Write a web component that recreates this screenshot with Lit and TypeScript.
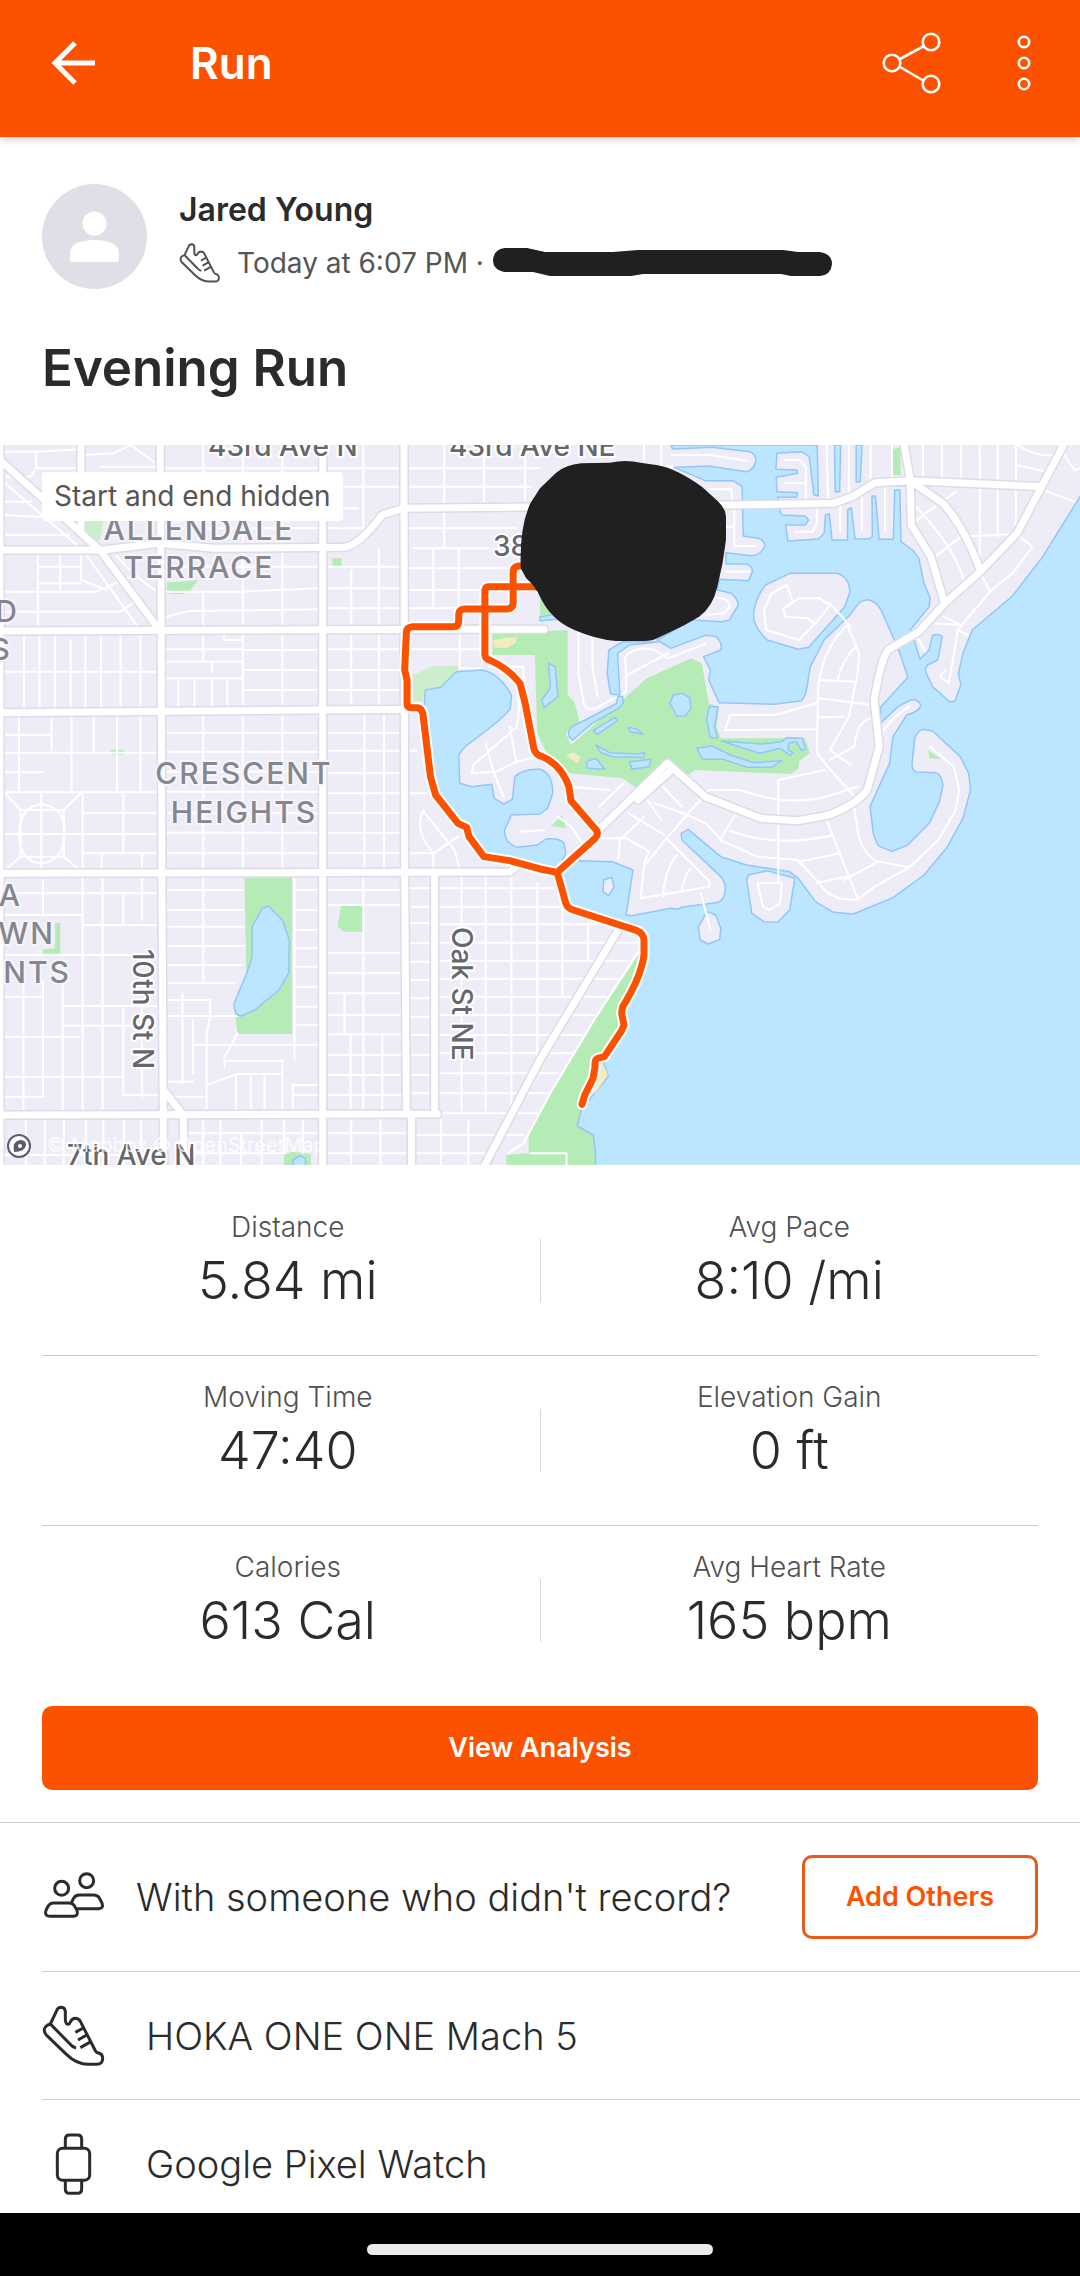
import { LitElement, html, svg, css } from "lit";
import { customElement, property } from "lit/decorators.js";

/* ---------- map geometry, in survey units (3136 x 2160) ---------- */

const SEA =
  "M3136 170L3028 350L2938 470L2823 570L2796 640L2783 700L2790 735L2773 783L2758 786L2708 740L2686 690L2693 675L2723 660L2736 590Q2728 580 2708 585L2698 630L2671 657L2658 610" +
  "L2643 570L2698 500L2701 475L2683 430L2668 355L2650 330L2616 305L2613 150H2598L2594 298H2553L2542 168H2532L2533 290L2523 297H2483L2472 203L2461 210V300H2416L2408 222L2397 225L2393 280L2376 297L2288 303L2281 255H2338L2348 240L2338 228L2270 225L2265 212" +
  "L2258 172H2313L2316 158L2256 155L2254 112L2316 100L2313 90L2253 88L2256 40L2328 35L2350 50L2363 165L2376 168L2373 15H1948L1953 27L2068 22L2178 35Q2195 45 2195 60Q2190 90 2168 95L2058 78L1958 82L2048 122H2128L2155 140L2158 288L2203 295Q2221 305 2221 318Q2210 345 2183 347L2108 338V372H2168Q2185 380 2185 395L2173 422L2088 418L2083 450L2123 460Q2142 475 2144 495L2118 540L2093 545L2008 540L1908 600L1948 625L2048 586Q2085 588 2083 595Q2098 610 2093 630L2043 650L2063 690L2058 720L2088 788L2248 793L2328 782L2340 760L2353 680L2393 600L2468 525L2493 490Q2505 478 2523 480Q2545 485 2558 510L2610 630L2636 712L2558 800L2556 850L2608 800L2643 780Q2665 775 2674 795Q2670 815 2633 825L2593 890L2583 970L2526 1100L2536 1180Q2545 1215 2555 1220L2590 1234L2636 1215L2698 1150L2728 1085L2738 1035Q2735 1005 2718 998L2660 996Q2648 990 2648 975L2656 895Q2662 875 2680 868L2708 873L2788 950L2813 1000L2818 1050L2796 1135L2748 1225L2683 1305L2593 1373L2478 1422L2420 1417L2368 1385L2318 1315L2293 1295L2168 1275L2093 1250L1998 1168L1978 1180L1980 1200L2093 1310Q2107 1330 2106 1345Q2105 1385 2078 1388L1978 1402L1968 1408L1948 1405L1833 1427L1818 1425L1838 1290L1778 1265L1678 1262L1618 1300L1648 1400L1858 1475L1868 1530L1853 1620L1803 1720L1808 1760L1748 1855L1766 1910L1718 1970L1688 2010L1676 2058L1723 2085L1730 2150L1728 2190H3160V170Z";

const LAKE =
  "M1235 750L1280 742L1325 695L1400 690Q1450 700 1485 765L1482 805Q1470 830 1350 920L1332 945L1335 1030L1370 1040L1428 1033L1435 1075L1462 1092L1488 1078L1495 1010Q1520 985 1568 988Q1605 1000 1605 1060L1590 1105L1568 1122L1485 1125L1465 1170Q1463 1205 1500 1222L1560 1215L1585 1197Q1625 1192 1638 1210L1643 1240L1618 1295L1480 1260L1400 1245L1355 1160L1300 1110L1260 1060L1232 800Z";

const CANALS =
  "M2423 15H2441L2438 155H2425ZM2486 15H2503L2498 125H2486ZM1808 605L1768 630L1763 700L1773 762L1800 765L1793 640L1828 615L1910 606Z" +
  "M1568 530L1620 522V538L1568 542ZM780 1398L820 1440L840 1500L838 1600L810 1650L740 1710L700 1728Q680 1728 680 1690L720 1590L732 1550V1460L762 1405Z" +
  "M850 2160L870 2148L887 2155V2190H855Z";

const ISLANDS =
  "M2293 400H2428Q2465 408 2468 455L2453 500L2348 622L2318 628L2228 600Q2185 560 2188 520Q2195 470 2223 435ZM2173 1305L2228 1292L2308 1315L2293 1410L2258 1447L2218 1445L2183 1420L2168 1320Z" +
  "M2053 1415L2078 1425L2093 1465L2090 1498L2056 1512L2033 1500L2028 1460ZM1753 1320L1776 1312L1783 1340L1768 1367L1751 1355Z";

const GREENS =
  "M1430 580L1648 570V765L1668 785L1683 845L1643 880L1658 915L1808 780L1878 715L2008 655L2038 670L2058 790L2088 800L2080 860L2093 895H2338L2351 940L2320 965V985L2296 1002L2018 990L1998 1005L1948 965L1848 1045L1808 1015L1653 1000L1583 930L1560 880L1553 645H1430Z" +
  "M710 1313H848V1782H690L680 1700L715 1600ZM990 1398H1053V1475H1000L980 1460ZM965 355H992V381H965ZM485 428L575 420L550 455Q520 468 485 460ZM312 937L325 929H355L365 937L355 944H325Z" +
  "M825 2190V2145L850 2135L903 2143V2190ZM160 1450L175 1448V1541H125V1528L160 1525ZM2588 28L2615 22V105H2588Z" +
  "M1853 1545L1728 1740L1600 1960L1535 2085V2140L1470 2145V2190H1728L1730 2150L1723 2085L1676 2058L1690 2000L1750 1860L1805 1760L1803 1720L1853 1620L1868 1530ZM1422 2146H1440L1420 2185L1405 2190ZM1600 1158L1632 1125L1643 1165ZM2695 930L2733 957L2698 955ZM1568 455L1590 500L1620 530L1568 526Z";

const PALE_GREENS = "M1200 705L1260 677H1330V690L1280 742L1235 750L1228 785H1200ZM250 245L300 240L290 300L240 300Z";
const SAND = "M1432 600L1500 590L1498 608L1470 625L1435 622ZM1643 945L1665 937L1686 952L1678 972ZM1750 1870L1765 1905L1725 1965Z";

const PONDS =
  "M1593 670L1612 680L1620 770L1580 802L1573 780L1598 745ZM1663 900Q1640 885 1660 860L1700 840L1790 790L1795 768L1808 770L1810 790L1795 805L1720 850Z" +
  "M1723 872L1785 832L1792 842L1735 883ZM1825 862L1850 868L1868 883L1830 875ZM1730 915L1770 938L1850 942L1872 938L1868 952L1780 950L1745 938Z" +
  "M1828 965L1890 958L1885 980L1835 988ZM1703 965L1730 955L1756 988L1705 985ZM1945 790L1955 765L1980 760L2003 772L2006 805L1990 828L1965 828Z" +
  "M2060 800L2085 800L2075 860L2083 893L2062 893L2052 835ZM2023 925L2068 918L2120 945L2190 968L2270 962L2240 982L2170 982L2100 958L2040 958Z" +
  "M2095 903L2210 912L2270 905L2285 893L2330 895L2338 925L2328 932L2312 905L2290 910L2288 930L2302 938L2295 946L2265 925L2205 940Z";

const MAJOR_ROADS =
  "M0 15V2190M235 15V270M465 15L468 560L470 1300L475 2190M937 15V2190M1173 15L1175 1300L1180 2022M1195 2022V2190M1262 1300V2022" +
  "M0 330H300L460 310L620 325L1000 322Q1040 318 1110 225L1170 205L2107 195L2420 190L2475 170L2540 128L2643 122L3025 140M0 573L1180 568H1580M0 818L1170 808M0 1300L1480 1296L1500 1280M0 2025L1270 2022" +
  "M0 60L290 330L470 580M475 1950L532 2025L535 2190M1400 2190L1570 1855L1795 1470M2626 15L2643 120L2646 255L2703 350L2743 490M2643 122L2738 190Q2800 260 2846 390" +
  "M3088 15L2953 280L2846 395L2743 490L2668 575L2578 630Q2558 660 2538 780L2553 920L2518 1050Q2480 1100 2398 1127L2318 1142L2208 1135L2048 1070L1938 970L1798 1110L1728 1180M1955 985L1853 1080";

const COAST_ROAD = "M1853 1535L1728 1735L1600 1955L1520 2110L1475 2140M1540 2140H1645V2190";

const STREETS =
  // west blocks
  "M15 110H90L105 85H230M105 35V85M15 35H105L230 28M250 45L330 40L380 15M380 15L465 80M290 80H465M15 185H90M15 225L130 232M15 285H200M15 130L240 330L400 560M15 455H280L400 400M110 340V565M15 515H350L400 480M175 340V455M110 380H235M110 430H235M235 340V420L310 450M340 350Q400 420 465 460" +
  "M480 85H925M480 140H925M590 15V300M705 15V320M820 15V320M480 200H925M480 265H925M480 455H700L925 445M480 530L550 513L925 508M590 455V560M705 330V560M820 330V560M480 380H925" +
  "M70 585V800M115 585V800M160 585V800M205 600V800M248 585V800M293 585V800M350 585V800M408 585V800M15 695H465" +
  "M480 628H700M590 580V665M480 665H700M705 580V800M820 580V800M705 630H925M705 690H925M705 750H925M480 715H700M518 715V800M565 715V800M615 665V695M615 715V800M660 715V800M650 580V600H700" +
  "M15 885H150M55 830V1055M150 830V930M208 830V1055M272 830V935M340 830V1055M408 830V1055M15 938H465M15 997H125M15 1057H465M480 878H925M480 935H925M480 995H925M480 1055H925M590 825V1290M705 825V1290M820 825V1290" +
  "M15 1060L60 1110H185L235 1060M120 1060V1290M240 1060V1290M358 1060V1240M15 1182H465M60 1110V1250L15 1290M185 1110V1250L230 1290M60 1250H185M120 1093Q188 1100 188 1180Q185 1265 120 1270Q55 1265 55 1180Q58 1100 120 1093M240 1118H465M240 1240H465M295 1240V1290M412 1240V1290M480 1120H925M480 1178H925M480 1240H925" +
  "M15 1360H235M125 1320V1420M15 1425H235M240 1310V2010M298 1310V2010M358 1360V1450M412 1310V1440M240 1360H465M240 1455H465M15 1545H465M15 1670H120M68 1630V2010M125 1625V1970M182 1620V2010M180 1698H465M180 1757H465M15 1790H230M15 1910H355M358 1700V1960M412 1700V1970M15 1970H120M358 1965H465" +
  "M480 1350H705M480 1410H705M480 1460H705M480 1518H710M480 1575H700M480 1630H680M590 1310V1630M480 1680H610M530 1660V1930M560 1740V1900M480 1728H690M690 1780L652 1850V1880M610 1680V1730L600 1780V2010M560 1814H925M600 1935L690 1902H820V1860M652 1862H820M685 1905V2010M728 1905V2010M768 1905V2010M820 1905V2010M850 1935V2010M850 1935H925M480 1925H560M480 1970H590M850 1965H925M855 1310V1860M855 1350H925M855 1410H925M855 1470H925M855 1525H925M855 1580H925M855 1640H925M855 1700H925M855 1755H925" +
  "M75 2040V2190M130 2040V2190M185 2040V2190M250 2040V2190M300 2040V2190M360 2040V2190M410 2040V2190M590 2040V2190M640 2040V2190M700 2080V2190M760 2040V2190M825 2040V2140M880 2040V2140M15 2145H465M545 2080H925M545 2140H820" +
  // central blocks
  "M950 85H1160M950 140H1160M1055 15V290M950 205H1040M950 265H1060M950 380H1160M1020 390V560M1100 330V560M950 445H1160M950 505H1160M1185 85H1568M1185 140H1540M1290 15V190M1405 15V190M1525 15V190M1185 265H1500M1290 215V320M1200 325H1420M1258 325V500M1332 325V500M1185 385H1480M1185 450H1400M1185 505H1330" +
  "M1020 580V800M1100 580V800M950 628H1160M950 690H1160M950 750H1160M1335 575V685M1335 628H1405M1195 628H1335M1335 685H1400M1058 820V1290M950 878H1160M950 932H1210M950 1000H1160M950 1060H1240M950 1118H1160M950 1178H1160M950 1238H1160M1115 820V1290" +
  "M1230 1115L1320 1230L1335 1290M1230 1110Q1200 1170 1258 1240L1330 1190M1185 1240H1258V1290M1055 1310V2010M950 1350H1165M950 1395H1165M950 1538H1165M950 1600H1165M950 1660H1165M950 1725H1165M950 1783H1165M1000 1660V1780M1110 1785V2010M950 1845H1165M950 1905H1165M950 1965H1165M1018 1785V2010" +
  "M1185 1345H1250M1185 1400H1250M1185 1450H1250M1185 1510H1250M1185 1565H1250M1185 1620H1250M1185 1675H1250M1185 1730H1250M1185 1785H1250M1185 1845H1250M1185 1905H1250M1185 1960H1250" +
  "M1275 1345H1630M1275 1400H1640M1275 1453H1800M1275 1508H1855M1275 1562H1830M1275 1616H1795M1275 1670H1760M1275 1725H1725M1275 1785H1690M1275 1840H1660M1275 1900H1620M1275 1960H1590M1275 2020H1560M1340 1310V2010M1410 1310V2010M1485 1310V2010M1560 1330V1850M1633 1330V1670M1707 1450V1560M1210 2085H1520M1210 2140H1430M1280 2040V2190M1360 2040V2190M950 2080H1180M950 2140H1180M1020 2040V2190M1105 2040V2190" +
  "M1410 910L1435 1000L1462 1070M1480 860L1500 970M1370 1000L1375 975L1500 860Q1510 820 1505 750M1370 1000L1440 995L1500 965L1560 950M1420 680H1520V730M1510 1175L1580 1170M1620 1130L1660 1160L1690 1210" +
  // golf side and north shore
  "M1680 575V700L1695 790Q1705 815 1730 805L1818 755V700L1815 650Q1850 615 1900 630L1940 655L2050 610M1720 580V680L1735 770M1820 705L1940 640M1950 45L2060 45L2170 62M2108 150H2125V190M2060 148H2125M2132 205V318H2195M2108 260H2130M2108 395H2175M2080 472L2110 480L2120 500L2100 520L2050 525M1640 80H2060M1870 15V80M1920 15V90" +
  "M2280 60H2320L2340 80V185M2280 130H2338M2310 275H2360L2372 250V195M2400 15L2405 190M2440 190V275M2465 15V160M2503 170V270M2528 15V140M2570 130V270M2590 15V125" +
  // east shore
  "M2680 15V125M2735 15V130M2790 15V130M2845 15V380M2897 15V290M2950 15V270M2950 75L3040 95M3000 140L3120 185M3070 15L3120 90L3136 85M2955 15Q3000 50 3060 45M2655 245L2775 155M2655 195Q2780 330 2800 430M2715 350L2790 290L2930 283M2955 285L2998 320L2940 400L2873 455M2848 400L2875 455L2805 540L2780 575L2770 640L2755 730L2730 710L2745 690M2715 550L2790 555L2740 530M2780 570L2810 585M2660 585L2690 640" +
  // keys
  "M2410 490L2450 530L2495 640L2490 700L2465 830L2410 930M2455 560Q2380 640 2375 760L2372 940L2420 1000L2490 1080M2485 620Q2445 660 2432 720M2378 720L2480 725M2380 775L2535 795M2378 832L2450 830M2110 870L2370 868M2370 790L2250 825H2120L2105 870M2530 835Q2490 840 2480 920L2410 960M2410 930L2470 975M2556 880L2600 830L2640 800M2395 990L2260 1020V1270M1998 1120L2060 1050L2150 1050Q2280 1100 2400 1070L2490 1040" +
  "M2700 920L2770 980L2785 1050L2775 1110L2725 1200L2640 1282L2540 1262Q2490 1220 2488 1150L2480 1100M2400 1140L2490 1375M2640 1282L2540 1340L2490 1378Q2410 1385 2380 1330L2315 1260L2200 1250L2090 1200L2135 1125M2120 1172Q2250 1225 2420 1185M2320 1265L2440 1240M2370 1330L2480 1305M2550 1265L2450 1320" +
  "M1995 1125L1935 1195L1870 1280L1860 1375L2060 1340L2060 1325L1935 1195M1995 1125L2050 1150L2095 1200M1925 1370Q1930 1290 1965 1245M1980 1355Q1985 1310 2005 1285M1825 1120L1930 1185M1795 1260L1800 1200L1870 1130M1740 1195H1820L1885 1235L1870 1270M1900 1090L1960 1110L1995 1125M1655 1040L1770 1050M1740 1100L1810 1030M1880 1080L1920 1140M1925 1040L1980 1100";

const ISLAND_STREETS =
  "M2300 480L2285 435L2240 460L2218 510L2225 570L2320 600L2368 550L2410 495L2380 475H2320L2275 505L2280 530L2345 535L2365 550M2410 490L2470 560M2260 1250V1330M2200 1330L2215 1400L2235 1410L2265 1390L2270 1330H2200M2035 1360L2063 1470";

const ROUTE =
  "M1560 378H1505Q1490 380 1490 398V488Q1490 505 1472 507H1350Q1332 508 1332 524V542Q1332 560 1316 560H1198Q1180 562 1180 578L1175 690L1182 720V792Q1182 803 1195 803H1212Q1225 805 1228 822L1250 1010L1265 1065L1330 1150L1355 1162L1362 1190L1405 1250L1480 1262L1568 1287L1618 1297" +
  "M1600 447L1550 440H1418Q1408 440 1408 455V645Q1410 658 1425 662Q1475 685 1510 730L1525 790L1550 925Q1555 945 1575 950Q1630 975 1652 1040L1658 1082L1733 1172Q1738 1185 1728 1195L1618 1297L1643 1390Q1648 1405 1665 1410L1850 1472Q1868 1480 1870 1500V1545Q1862 1610 1808 1700L1805 1720L1812 1755L1805 1772L1755 1850L1735 1855Q1726 1860 1728 1880L1722 1915L1698 1965L1690 1993";

const BLOT =
  "M1568 145L1615 98Q1640 76 1688 70L1770 68Q1818 58 1860 68L1910 76Q1960 84 2038 140L2083 182Q2108 206 2108 230V300L2098 370L2083 440Q2070 500 2030 530L1988 555L1910 594Q1895 603 1870 603H1788Q1730 598 1668 570Q1600 540 1568 470Q1555 440 1528 415L1512 385Q1508 260 1540 190Z";

const mapArt = svg`
  <g class="survey" transform="translate(0 -5) scale(0.34439 0.33333)">
    <rect class="land" width="3136" height="2200"></rect>
    <path class="green" d=${GREENS}></path>
    <path class="pale" d=${PALE_GREENS}></path>
    <path class="street" d=${STREETS}></path>
    <path class="water" d=${SEA}></path>
    <path class="water" d=${LAKE}></path>
    <path class="water" d=${CANALS}></path>
    <path class="water" d=${PONDS}></path>
    <path class="shore" d=${ISLANDS}></path>
    <path class="sand" d=${SAND}></path>
    <path class="street" d=${ISLAND_STREETS}></path>
    <path class="street" d=${COAST_ROAD}></path>
    <path class="casing" d=${MAJOR_ROADS}></path>
    <path class="road" d=${MAJOR_ROADS}></path>
    <path class="route-halo" d=${ROUTE}></path>
    <path class="route" d=${ROUTE}></path>
  </g>
  <g class="road-name">
    <text x="208" y="11">43rd Ave N</text>
    <text x="449" y="11">43rd Ave NE</text>
    <text x="493" y="111">38th Ave</text>
    <text x="67" y="720">7th Ave N</text>
    <text transform="translate(133 504) rotate(90)">10th St N</text>
    <text transform="translate(452 482) rotate(90)">Oak St NE</text>
  </g>
  <g class="place">
    <text x="199" y="95">ALLENDALE</text>
    <text x="199" y="133">TERRACE</text>
    <text x="244" y="339">CRESCENT</text>
    <text x="244" y="378">HEIGHTS</text>
  </g>
  <g class="place cut">
    <text x="19" y="177">D</text>
    <text x="12" y="215">S</text>
    <text x="22" y="461">A</text>
    <text x="55" y="499">WN</text>
    <text x="71" y="538">NTS</text>
  </g>
  <text class="credit" x="47" y="707">© Mapbox © OpenStreetMap</text>
  <circle cx="19" cy="701" r="11" fill="#fff" stroke="#5b5b70" stroke-width="2"></circle>
  <path d="M14 707q-2-11 6-12q6 0 6 5q-1 7-12 7z" fill="#5b5b70"></path>
  <circle cx="20" cy="701" r="2" fill="#fff"></circle>
  <path class="blot" transform="translate(0 -5) scale(0.34439 0.33333)" d=${BLOT}></path>
`;

/* ---------- icons ---------- */

const icons = {
  back: svg`<path d="M95 64H56M75 44L55 64L75 84" stroke-width="5"></path>`,
  people: svg`
    <circle cx="95" cy="118" r="21"></circle><circle cx="170" cy="95" r="21"></circle>
    <path d="M71 162H117Q128 162 133 170L141 184Q146 202 130 202H61Q42 202 48 184L53 174Q59 162 71 162Z"></path>
    <path d="M125 160L130 149Q136 138 148 138H190Q203 138 208 147L216 162Q222 179 205 179H140"></path>`,
  shoe: svg`
    <path d="M61 522L79 484Q83 472 94 472Q105 473 106 484V508Q107 523 114 523Q119 522 121 516Q126 505 137 505Q147 506 151 514L196 602Q200 609 207 609Q217 612 218 624Q219 643 200 643H175Q140 643 110 614L50 556Q42 548 43 538Q46 526 61 522L120 582Q128 592 138 594"></path>
    <path d="M136 547L160 534M144 570L170 555M151 593L183 575"></path>`,
  watch: svg`
    <rect x="82" y="893" width="97" height="96" rx="16"></rect>
    <path d="M106 892V866Q106 853 118 853H143Q155 853 155 866V892M106 990V1015Q106 1028 118 1028H143Q155 1028 155 1015V990"></path>`,
};

@customElement("stat-cell")
class StatCell extends LitElement {
  @property() label = "";
  @property() value = "";

  static styles = css`
    :host { display: flex; flex-direction: column; align-items: center; gap: 4px; padding: 21px 0 44px; }
    .label { font-size: 28px; line-height: 40px; color: #505050; font-weight: 300; }
    .value { font-size: 52px; line-height: 60px; color: #2b2b2b; font-weight: 300; }
  `;

  render() {
    return html`<span class="label">${this.label}</span><span class="value">${this.value}</span>`;
  }
}

@customElement("app-root")
class AppRoot extends LitElement {
  private stats = [
    [["Distance", "5.84 mi"], ["Avg Pace", "8:10 /mi"]],
    [["Moving Time", "47:40"], ["Elevation Gain", "0 ft"]],
    [["Calories", "613 Cal"], ["Avg Heart Rate", "165 bpm"]],
  ];

  static styles = css`
    :host {
      display: flex; flex-direction: column; height: 100vh; overflow: hidden;
      background: #fff; color: #2b2b2b;
      font-family: Inter, "Liberation Sans", sans-serif; font-size: 28px;
    }
    * { box-sizing: border-box; }
    h1, h2, p, ul { margin: 0; padding: 0; }
    button { font: inherit; border: 0; background: none; padding: 0; cursor: pointer; }
    svg { display: block; flex: none; }

    .bar {
      display: flex; align-items: center; height: 137px; flex: none; z-index: 1;
      padding: 0 26px 12px 42px; background: #fc5200; color: #fff;
      box-shadow: 0 2px 8px rgba(0, 0, 0, 0.22);
    }
    .bar h1 { flex: 1; margin-left: 84px; font-size: 44px; line-height: 56px; font-weight: 600; }
    .bar svg { fill: none; stroke: #fff; }
    .tools { display: flex; gap: 46px; }

    main { flex: 1; min-height: 0; overflow-y: auto; scrollbar-width: none; }

    .athlete { display: flex; align-items: center; gap: 32px; padding: 47px 42px 0; }
    .who { display: flex; flex-direction: column; gap: 12px; }
    .name { font-size: 32px; line-height: 40px; font-weight: 600; }
    .when { display: flex; align-items: center; line-height: 40px; color: #555; }
    .when .line { fill: none; stroke: #505050; stroke-width: 9; margin-right: 16px; }
    .when .mark { margin-left: 9px; }
    .title { padding: 49px 42px 47px; font-size: 51px; line-height: 60px; font-weight: 600; }

    .map { position: relative; }
    .map > svg { width: 100%; height: auto; aspect-ratio: 3 / 2; overflow: hidden; }
    .chip {
      position: absolute; left: 42px; top: 27px; padding: 0 12px; border-radius: 4px;
      background: #fff; color: #555; line-height: 49px;
    }
    .survey path { vector-effect: non-scaling-stroke; stroke-linejoin: round; stroke-linecap: round; fill: none; }
    .land { fill: #eeedf7; }
    .survey .green { fill: #b5ecb5; }
    .survey .pale { fill: #cdeecd; }
    .survey .sand { fill: #f2edc0; }
    .survey .water { fill: #bce6ff; stroke: #93c5fb; stroke-width: 1.5px; }
    .survey .shore { fill: #eeedf7; stroke: #93c5fb; stroke-width: 1.5px; }
    .street { stroke: #fff; stroke-width: 2px; }
    .casing { stroke: #dcdbe9; stroke-width: 10px; }
    .road { stroke: #fff; stroke-width: 7px; }
    .route-halo { stroke: #fff; stroke-width: 11px; }
    .route { stroke: #fc5200; stroke-width: 7px; }
    .blot { fill: #202020; }
    .road-name, .place { fill: #66676d; font-size: 28px; font-weight: 500; paint-order: stroke; stroke: #fff; stroke-width: 4px; stroke-linejoin: round; }
    .place { fill: #85868e; font-size: 30px; letter-spacing: 2px; text-anchor: middle; stroke: #f6f5fb; }
    .cut { text-anchor: end; }
    .credit { fill: #fff; fill-opacity: 0.8; font-size: 20px; }

    .stats { padding: 21px 42px 0; }
    .pair { display: grid; grid-template-columns: 1fr 1px 1fr; align-items: center; border-bottom: 1px solid #ccc; }
    .pair stat-cell:first-child { padding-right: 6px; }
    .pair:last-child { border-bottom-color: transparent; }
    .rule { height: 63px; background: #d6d6d6; }

    .cta { padding: 10px 42px 32px; border-bottom: 1px solid #d0d0d0; }
    .primary, .secondary { height: 84px; border-radius: 10px; font-size: 27px; font-weight: 600; line-height: 40px; }
    .primary { width: 100%; background: #fc5200; color: #fff; }
    .secondary { padding: 0 41px; border: 3px solid #e85a1a; color: #fc5200; }

    .rows { list-style: none; padding-left: 42px; font-size: 38px; line-height: 48px; }
    .row { display: flex; align-items: center; gap: 40px; height: 128px; padding-right: 42px; border-bottom: 1px solid #d0d0d0; }
    .row.others { height: 149px; gap: 30px; }
    .row .text { flex: 1; font-weight: 300; }
    .row svg { fill: none; stroke: #2b2b2b; stroke-width: 9; }

    .gesture { flex: none; height: 63px; background: #000; display: flex; align-items: center; justify-content: center; padding-top: 10px; }
    .pill { width: 32%; height: 11px; border-radius: 6px; background: #ebebeb; }
  `;

  render() {
    return html`
      <header class="bar">
        <button aria-label="Back">
          <svg width="64" height="64" viewBox="42 32 64 64">${icons.back}</svg>
        </button>
        <h1>Run</h1>
        <div class="tools">
          <button aria-label="Share">
            <svg width="72" height="72" viewBox="876 26 72 72" stroke-width="2.6">
              <circle cx="892" cy="62" r="8.3"></circle><circle cx="931" cy="41" r="8.3"></circle><circle cx="931" cy="83" r="8.3"></circle>
              <path d="M900 58L924 45M900 66L924 80"></path>
            </svg>
          </button>
          <button aria-label="More options">
            <svg width="60" height="72" viewBox="994 26 60 72" stroke-width="2.6">
              <circle cx="1024" cy="41" r="5.2"></circle><circle cx="1024" cy="62" r="5.2"></circle><circle cx="1024" cy="83" r="5.2"></circle>
            </svg>
          </button>
        </div>
      </header>

      <main>
        <section class="athlete">
          <svg width="105" height="105" viewBox="0 0 105 105" aria-hidden="true">
            <circle cx="52.5" cy="52.5" r="52.5" fill="#dfdfe8"></circle>
            <circle cx="52.5" cy="39.5" r="12" fill="#fff"></circle>
            <path d="M30 78q-2 0-2-2v-6q0-14 24.500-14t24.500 14q0 5-1 8z" fill="#fff"></path>
          </svg>
          <div class="who">
            <p class="name">Jared Young</p>
            <p class="when">
              <svg class="line" width="42" height="42" viewBox="36 462 192 192">${icons.shoe}</svg>
              Today at 6:07 PM ·
              <svg class="mark" width="340" height="32" viewBox="0 0 340 32" aria-hidden="true">
                <path d="M12 1H34L52 5H120L145 3H290L305 5H327Q339 7 339 17Q338 28 327 29H298L288 27H150L138 29H57L40 25H12Q0 23 0 13Q1 2 12 1Z" fill="#202020"></path>
              </svg>
            </p>
          </div>
        </section>
        <h2 class="title">Evening Run</h2>

        <section class="map">
          <svg viewBox="0 0 1080 720" role="img" aria-label="Route map">${mapArt}</svg>
          <span class="chip">Start and end hidden</span>
        </section>

        <section class="stats">
          ${this.stats.map(
            ([a, b]) => html`
              <div class="pair">
                <stat-cell label=${a[0]} value=${a[1]}></stat-cell>
                <span class="rule"></span>
                <stat-cell label=${b[0]} value=${b[1]}></stat-cell>
              </div>`
          )}
        </section>

        <div class="cta"><button class="primary">View Analysis</button></div>

        <ul class="rows">
          <li class="row others">
            <svg width="64" height="64" viewBox="36 48 192 192">${icons.people}</svg>
            <span class="text">With someone who didn't record?</span>
            <button class="secondary">Add Others</button>
          </li>
          <li class="row">
            <svg width="64" height="64" viewBox="36 462 192 192">${icons.shoe}</svg>
            <span class="text">HOKA ONE ONE Mach 5</span>
          </li>
          <li class="row">
            <svg width="64" height="64" viewBox="36 844 192 192">${icons.watch}</svg>
            <span class="text">Google Pixel Watch</span>
          </li>
        </ul>
      </main>

      <footer class="gesture"><span class="pill"></span></footer>
    `;
  }
}
